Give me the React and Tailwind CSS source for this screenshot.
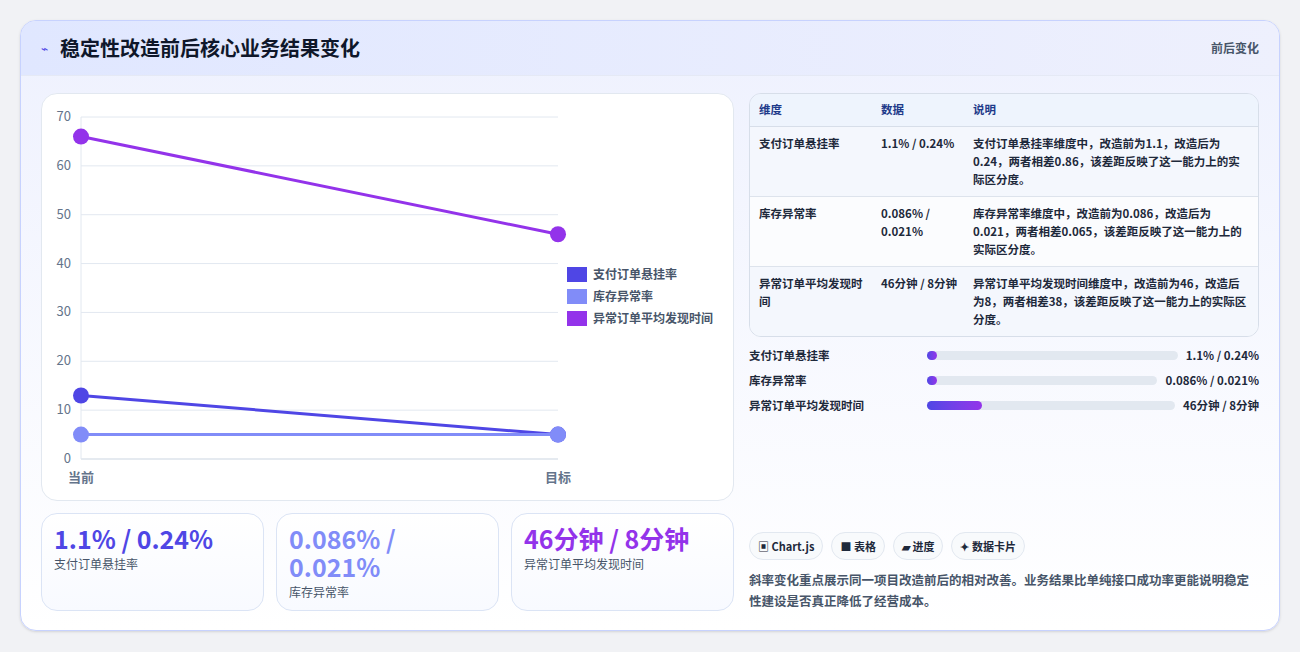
import React from "react";

const F = { fontFamily: '"Noto Sans CJK SC", "Noto Sans", sans-serif' };

function Chart() {
  const x0 = 39, x1 = 516, y0 = 365, k = 342 / 70;
  const y = (v) => y0 - v * k;
  const ticks = [0, 10, 20, 30, 40, 50, 60, 70];
  const series = [
    { c: "#4f46e5", a: 13, b: 5 },
    { c: "#818cf8", a: 5, b: 5 },
    { c: "#9333ea", a: 66, b: 46 },
  ];
  return (
    <svg width="693" height="407" className="block">
      {ticks.map((t) => (
        <g key={t}>
          <line x1={x0} x2={x1} y1={y(t)} y2={y(t)} stroke={t === 0 ? "#cbd5e1" : "#e2e8f0"} />
          <text x={x0 - 10} y={y(t) + 4} textAnchor="end" fontSize="13" fill="#64748b" style={F}>{t}</text>
        </g>
      ))}
      <line x1={x0} x2={x0} y1={y(70)} y2={y0} stroke="#e2e8f0" />
      {series.map((s, i) => (
        <g key={i}>
          <line x1={x0} y1={y(s.a)} x2={x1} y2={y(s.b)} stroke={s.c} strokeWidth="3" />
          <circle cx={x0} cy={y(s.a)} r="8" fill={s.c} />
          <circle cx={x1} cy={y(s.b)} r="8" fill={s.c} />
        </g>
      ))}
      <text x={x0} y={388} textAnchor="middle" fontSize="13" fill="#64748b" fontWeight="600" style={F}>当前</text>
      <text x={x1} y={388} textAnchor="middle" fontSize="13" fill="#64748b" fontWeight="600" style={F}>目标</text>
      {[["#4f46e5", "支付订单悬挂率"], ["#818cf8", "库存异常率"], ["#9333ea", "异常订单平均发现时间"]].map(([c, l], i) => (
        <g key={l}>
          <rect x={525} y={173 + i * 22} width="20" height="15" fill={c} />
          <text x={551} y={185 + i * 22} fontSize="12" fill="#475569" fontWeight="600" style={F}>{l}</text>
        </g>
      ))}
    </svg>
  );
}

const rows = [
  ["支付订单悬挂率", "1.1% / 0.24%", "支付订单悬挂率维度中，改造前为1.1，改造后为0.24，两者相差0.86，该差距反映了这一能力上的实际区分度。"],
  ["库存异常率", "0.086% / 0.021%", "库存异常率维度中，改造前为0.086，改造后为0.021，两者相差0.065，该差距反映了这一能力上的实际区分度。"],
  ["异常订单平均发现时间", "46分钟 / 8分钟", "异常订单平均发现时间维度中，改造前为46，改造后为8，两者相差38，该差距反映了这一能力上的实际区分度。"],
];

export default function App() {
  return (
    <div className="w-[1300px] h-[652px] bg-[#f1f2f5] p-5" style={F}>
      <div className="h-[611px] rounded-2xl border border-[#c7d2fe] bg-gradient-to-b from-[#eef1fe] to-white overflow-hidden shadow-sm flex flex-col">
        <div className="h-[55px] shrink-0 flex items-center justify-between px-5 bg-gradient-to-r from-[#e0e7ff] to-[#eef0fd] border-b border-[#e5e9f5]">
          <div className="flex items-center gap-3">
            <span className="text-[#4f46e5] text-xs">⌁</span>
            <span className="text-[20px] font-bold text-[#0f172a]">稳定性改造前后核心业务结果变化</span>
          </div>
          <span className="text-xs font-semibold text-[#475569]">前后变化</span>
        </div>
        <div className="flex-1 flex gap-[15px] px-5 pt-[17px] pb-[19px]">
          <div className="w-[693px] flex flex-col gap-3">
            <div className="h-[408px] rounded-2xl bg-white border border-[#e2e8f0]">
              <Chart />
            </div>
            <div className="grid grid-cols-3 gap-3">
              {[["1.1% / 0.24%", "支付订单悬挂率", "text-[#4f46e5]"], ["0.086% / 0.021%", "库存异常率", "text-[#818cf8]"], ["46分钟 / 8分钟", "异常订单平均发现时间", "text-[#9333ea]"]].map(([v, l, c]) => (
                <div key={l} className="h-[98px] rounded-2xl border border-[#dbe4f5] bg-gradient-to-b from-white to-[#f8faff] px-[12px] pt-[10px]">
                  <div className={`text-[25px] leading-[28px] font-bold ${c}`}>{v}</div>
                  <div className="text-xs text-[#475569] mt-1">{l}</div>
                </div>
              ))}
            </div>
          </div>
          <div className="flex-1 flex flex-col">
            <div className="rounded-xl border border-[#d7dee9] overflow-hidden text-[11.5px] text-[#1e293b]">
              <div className="grid grid-cols-[122px_92px_1fr] bg-[#eef4fd] h-[33px] items-center px-[9px] text-[#1e3a8a] font-semibold border-b border-[#d7dee9]">
                <span>维度</span><span>数据</span><span>说明</span>
              </div>
              {rows.map((r, i) => (
                <div key={i} className={`grid grid-cols-[122px_92px_1fr] px-[9px] pt-[7px] pb-[8px] leading-[18px] font-semibold ${i === 1 ? "bg-[#fbfcfe]" : "bg-[#f4f7fd]"} ${i < 2 ? "border-b border-[#dde3ec]" : ""}`}>
                  <span className="pr-3">{r[0]}</span>
                  <span className="pr-3">{r[1]}</span>
                  <span>{r[2]}</span>
                </div>
              ))}
            </div>
            <div className="flex flex-col gap-[8px] mt-[10px] text-[11.5px] font-semibold text-[#1e293b]">
              {[["支付订单悬挂率", "1.1% / 0.24%", "4%"], ["库存异常率", "0.086% / 0.021%", "4%"], ["异常订单平均发现时间", "46分钟 / 8分钟", "22%"]].map(([l, v, w]) => (
                <div key={l} className="flex items-center h-[17px]">
                  <span className="w-[178px] shrink-0">{l}</span>
                  <div className="flex-1 h-[9px] rounded-full bg-[#e2e8f0] mr-2">
                    <div className="h-full rounded-full bg-gradient-to-r from-[#4f46e5] to-[#9333ea] min-w-[10px]" style={{ width: w }} />
                  </div>
                  <span className="font-bold">{v}</span>
                </div>
              ))}
            </div>
            <div className="mt-auto flex gap-2 text-[11px] font-semibold text-[#1e293b]">
              {["▣ Chart.js", "■ 表格", "▰ 进度", "✦ 数据卡片"].map((t) => (
                <span key={t} className="h-[28px] px-2 flex items-center rounded-full border border-[#e2e8f0] bg-[#f8fafc]">{t}</span>
              ))}
            </div>
            <p className="mt-[9px] text-[12.5px] leading-[21px] font-semibold text-[#475569]">斜率变化重点展示同一项目改造前后的相对改善。业务结果比单纯接口成功率更能说明稳定性建设是否真正降低了经营成本。</p>
          </div>
        </div>
      </div>
    </div>
  );
}
